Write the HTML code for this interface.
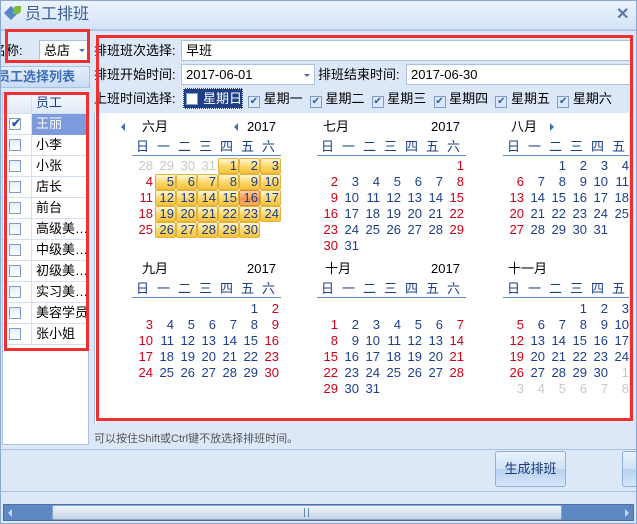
<!DOCTYPE html>
<html><head><meta charset="utf-8"><style>
*{margin:0;padding:0;box-sizing:border-box}
body{width:637px;height:524px;overflow:hidden;background:#dce8f7;font-family:"Liberation Sans","Noto Sans CJK SC",sans-serif;font-size:13px;color:#000;position:relative}
.a{position:absolute}
.title{left:0;top:0;width:637px;height:30px;background:linear-gradient(#eef4fc,#d3e3f6);border-bottom:1px solid #b5cbe8}
.red{position:absolute;border:3px solid #f03030}
.inp{position:absolute;background:#fff;border:1px solid #a9c1e2;height:21px;line-height:19px;padding-left:4px;font-size:13px}
.arrow{position:absolute;width:0;height:0;border-left:3px solid transparent;border-right:3px solid transparent;border-top:3px solid #4a6fa8}
.lst{left:2px;top:92px;width:87px;height:353px;background:#fff;border:1px solid #a9c1e2}
.row{position:absolute;left:0;width:86px;height:21px;border-bottom:1px solid #d3e0f0}
.cb{position:absolute;left:6px;top:4px;width:12px;height:12px;border:1px solid #7d9cc8;background:linear-gradient(#e6eef9,#fff)}
.nm{position:absolute;left:28px;top:0;width:58px;height:21px;border-left:1px solid #d3e0f0;padding-left:4px;line-height:20px;white-space:nowrap}
.cal{left:97px;top:113px;width:532px;height:305px;background:#fff}
.m{position:absolute;width:150px}
.mt{position:absolute;top:0;height:16px;line-height:16px;font-size:13px}
.wd{position:absolute;top:20px;left:-2px;width:149px;height:17px;border-bottom:1px solid #5a8ad0;white-space:nowrap}
.wd span{display:inline-block;width:21px;text-align:center;color:#1d3f8a;line-height:16px}
.dr{position:absolute;left:0;height:16px;white-space:nowrap}
.dr span{display:inline-block;width:21px;height:16px;text-align:right;padding-right:2px;line-height:16px;color:#1d3f8a;vertical-align:top}
.dr .r{color:#d00018}.dr .g{color:#c8c8c8}
.dr .h{background:linear-gradient(#fff8d8,#fbd766 55%,#f6c23c);border:1px solid #e2b23c;border-radius:2px;line-height:14px;padding-right:1px}
.dr .t{background:linear-gradient(#ffd0a0,#f5944a 60%,#f7b060);border:1px solid #e08a30;border-radius:2px;line-height:14px;padding-right:1px}
.btn{position:absolute;left:495px;top:451px;width:71px;height:36px;border:1px solid #8fb0da;border-radius:3px;background:linear-gradient(#e9f2fc,#cfe2f7 50%,#b6d1f0 51%,#d6e7fa);text-align:center;line-height:34px;color:#1a3a78}
</style></head><body>
<div class="a title"></div>
<div class="a" style="left:6px;top:8px;width:10px;height:10px;background:#5a86c6;transform:rotate(45deg)"></div>
<div class="a" style="left:13px;top:6px;width:8px;height:8px;background:#7cbe3a;border-radius:50% 0 50% 0"></div>
<div class="a" style="left:25px;top:5px;font-size:16px;color:#3a5d92;line-height:20px">员工排班</div>
<div class="a" style="left:616px;top:4px;font-size:16px;font-weight:bold;color:#5a7aa8">✕</div>
<div class="a" style="left:0;top:30px;width:637px;height:1px;background:#a9c1e2"></div>

<div class="a" style="left:-7px;top:42px;line-height:18px">名称:</div>
<div class="inp" style="left:39px;top:40px;width:50px">总店</div>
<div class="arrow" style="left:79px;top:49px"></div>
<div class="a" style="left:0;top:66px;width:90px;height:22px;background:linear-gradient(#e7f0fb,#c9dcf3);border:1px solid #a9c1e2"></div>
<div class="a" style="left:-3px;top:68px;font-weight:bold;color:#3d6eb8;line-height:18px;font-size:13px">员工选择列表</div>

<div class="a lst">
<div class="row" style="top:0;background:linear-gradient(#f5f9fe,#dfeaf8)"><div class="nm" style="color:#1d3f8a">员工</div></div>
<div class="row" style="top:21px"><div class="cb" style="background:#fff"><div style="position:absolute;left:1px;top:-3px;color:#2a5aa8;font-size:12px;font-weight:bold">✔</div></div><div class="nm" style="background:#7d9bdc;color:#fff">王丽</div></div>
<div class="row" style="top:42px"><div class="cb"></div><div class="nm">小李</div></div>
<div class="row" style="top:63px"><div class="cb"></div><div class="nm">小张</div></div>
<div class="row" style="top:84px"><div class="cb"></div><div class="nm">店长</div></div>
<div class="row" style="top:105px"><div class="cb"></div><div class="nm">前台</div></div>
<div class="row" style="top:126px"><div class="cb"></div><div class="nm">高级美…</div></div>
<div class="row" style="top:147px"><div class="cb"></div><div class="nm">中级美…</div></div>
<div class="row" style="top:168px"><div class="cb"></div><div class="nm">初级美…</div></div>
<div class="row" style="top:189px"><div class="cb"></div><div class="nm">实习美…</div></div>
<div class="row" style="top:210px"><div class="cb"></div><div class="nm">美容学员</div></div>
<div class="row" style="top:231px"><div class="cb"></div><div class="nm">张小姐</div></div>
</div>

<div class="a" style="left:94px;top:42px;line-height:18px">排班班次选择:</div>
<div class="inp" style="left:181px;top:40px;width:456px">早班</div>
<div class="a" style="left:94px;top:66px;line-height:18px">排班开始时间:</div>
<div class="inp" style="left:181px;top:64px;width:134px">2017-06-01</div>
<div class="arrow" style="left:304px;top:74px"></div>
<div class="a" style="left:318px;top:66px;line-height:18px">排班结束时间:</div>
<div class="inp" style="left:406px;top:64px;width:231px">2017-06-30</div>
<div class="a" style="left:94px;top:90px;line-height:18px">上班时间选择:</div>
<div class="a" style="left:183px;top:88px;width:60px;height:21px;background:#1f3f86;border:1px dotted #fff"></div>
<div class="a" style="left:186px;top:93px;width:12px;height:12px;border:1px solid #7d9cc8;background:#fff"></div>
<div class="a" style="left:203px;top:90px;color:#fff;line-height:18px">星期日</div>
<div class="a" style="left:248px;top:90px;line-height:18px;white-space:nowrap;word-spacing:0">
<span style="display:inline-block;width:12px;height:12px;border:1px solid #7d9cc8;vertical-align:-1px;color:#2a5aa8;font-size:10px;line-height:10px;text-align:center">✔</span> 星期一 &nbsp;<span style="display:inline-block;width:12px;height:12px;border:1px solid #7d9cc8;vertical-align:-1px;color:#2a5aa8;font-size:10px;line-height:10px;text-align:center">✔</span> 星期二 &nbsp;<span style="display:inline-block;width:12px;height:12px;border:1px solid #7d9cc8;vertical-align:-1px;color:#2a5aa8;font-size:10px;line-height:10px;text-align:center">✔</span> 星期三 &nbsp;<span style="display:inline-block;width:12px;height:12px;border:1px solid #7d9cc8;vertical-align:-1px;color:#2a5aa8;font-size:10px;line-height:10px;text-align:center">✔</span> 星期四 &nbsp;<span style="display:inline-block;width:12px;height:12px;border:1px solid #7d9cc8;vertical-align:-1px;color:#2a5aa8;font-size:10px;line-height:10px;text-align:center">✔</span> 星期五 &nbsp;<span style="display:inline-block;width:12px;height:12px;border:1px solid #7d9cc8;vertical-align:-1px;color:#2a5aa8;font-size:10px;line-height:10px;text-align:center">✔</span> 星期六</div>

<div class="a cal" style="overflow:hidden">
<!-- June -->
<div class="m" style="left:37px;top:6px">
<div class="a" style="left:-13px;top:4px;border-top:4px solid transparent;border-bottom:4px solid transparent;border-right:4px solid #3d6eb8"></div>
<div class="mt" style="left:8px">六月</div>
<div class="a" style="left:100px;top:4px;border-top:4px solid transparent;border-bottom:4px solid transparent;border-right:4px solid #3d6eb8"></div>
<div class="mt" style="left:113px">2017</div>
<div class="wd"><span>日</span><span>一</span><span>二</span><span>三</span><span>四</span><span>五</span><span>六</span></div>
<div class="dr" style="top:39px"><span class="g">28</span><span class="g">29</span><span class="g">30</span><span class="g">31</span><span class="h">1</span><span class="h">2</span><span class="h">3</span></div>
<div class="dr" style="top:55px"><span class="r">4</span><span class="h">5</span><span class="h">6</span><span class="h">7</span><span class="h">8</span><span class="h">9</span><span class="h">10</span></div>
<div class="dr" style="top:71px"><span class="r">11</span><span class="h">12</span><span class="h">13</span><span class="h">14</span><span class="h">15</span><span class="t">16</span><span class="h">17</span></div>
<div class="dr" style="top:87px"><span class="r">18</span><span class="h">19</span><span class="h">20</span><span class="h">21</span><span class="h">22</span><span class="h">23</span><span class="h">24</span></div>
<div class="dr" style="top:103px"><span class="r">25</span><span class="h">26</span><span class="h">27</span><span class="h">28</span><span class="h">29</span><span class="h">30</span></div>
</div>
<!-- July -->
<div class="m" style="left:222px;top:6px">
<div class="mt" style="left:4px">七月</div><div class="mt" style="left:112px">2017</div>
<div class="wd"><span>日</span><span>一</span><span>二</span><span>三</span><span>四</span><span>五</span><span>六</span></div>
<div class="dr" style="top:39px"><span></span><span></span><span></span><span></span><span></span><span></span><span class="r">1</span></div>
<div class="dr" style="top:55px"><span class="r">2</span><span>3</span><span>4</span><span>5</span><span>6</span><span>7</span><span class="r">8</span></div>
<div class="dr" style="top:71px"><span class="r">9</span><span>10</span><span>11</span><span>12</span><span>13</span><span>14</span><span class="r">15</span></div>
<div class="dr" style="top:87px"><span class="r">16</span><span>17</span><span>18</span><span>19</span><span>20</span><span>21</span><span class="r">22</span></div>
<div class="dr" style="top:103px"><span class="r">23</span><span>24</span><span>25</span><span>26</span><span>27</span><span>28</span><span class="r">29</span></div>
<div class="dr" style="top:119px"><span class="r">30</span><span>31</span></div>
</div>
<!-- Aug -->
<div class="m" style="left:408px;top:6px">
<div class="mt" style="left:6px">八月</div>
<div class="a" style="left:45px;top:4px;border-top:4px solid transparent;border-bottom:4px solid transparent;border-left:4px solid #3d6eb8"></div>
<div class="wd"><span>日</span><span>一</span><span>二</span><span>三</span><span>四</span><span>五</span><span>六</span></div>
<div class="dr" style="top:39px"><span></span><span></span><span>1</span><span>2</span><span>3</span><span>4</span><span class="r">5</span></div>
<div class="dr" style="top:55px"><span class="r">6</span><span>7</span><span>8</span><span>9</span><span>10</span><span>11</span><span class="r">12</span></div>
<div class="dr" style="top:71px"><span class="r">13</span><span>14</span><span>15</span><span>16</span><span>17</span><span>18</span><span class="r">19</span></div>
<div class="dr" style="top:87px"><span class="r">20</span><span>21</span><span>22</span><span>23</span><span>24</span><span>25</span><span class="r">26</span></div>
<div class="dr" style="top:103px"><span class="r">27</span><span>28</span><span>29</span><span>30</span><span>31</span></div>
</div>
<!-- Sep -->
<div class="m" style="left:37px;top:148px">
<div class="mt" style="left:8px">九月</div><div class="mt" style="left:113px">2017</div>
<div class="wd"><span>日</span><span>一</span><span>二</span><span>三</span><span>四</span><span>五</span><span>六</span></div>
<div class="dr" style="top:40px"><span></span><span></span><span></span><span></span><span></span><span>1</span><span class="r">2</span></div>
<div class="dr" style="top:56px"><span class="r">3</span><span>4</span><span>5</span><span>6</span><span>7</span><span>8</span><span class="r">9</span></div>
<div class="dr" style="top:72px"><span class="r">10</span><span>11</span><span>12</span><span>13</span><span>14</span><span>15</span><span class="r">16</span></div>
<div class="dr" style="top:88px"><span class="r">17</span><span>18</span><span>19</span><span>20</span><span>21</span><span>22</span><span class="r">23</span></div>
<div class="dr" style="top:104px"><span class="r">24</span><span>25</span><span>26</span><span>27</span><span>28</span><span>29</span><span class="r">30</span></div>
</div>
<!-- Oct -->
<div class="m" style="left:222px;top:148px">
<div class="mt" style="left:6px">十月</div><div class="mt" style="left:112px">2017</div>
<div class="wd"><span>日</span><span>一</span><span>二</span><span>三</span><span>四</span><span>五</span><span>六</span></div>
<div class="dr" style="top:56px"><span class="r">1</span><span>2</span><span>3</span><span>4</span><span>5</span><span>6</span><span class="r">7</span></div>
<div class="dr" style="top:72px"><span class="r">8</span><span>9</span><span>10</span><span>11</span><span>12</span><span>13</span><span class="r">14</span></div>
<div class="dr" style="top:88px"><span class="r">15</span><span>16</span><span>17</span><span>18</span><span>19</span><span>20</span><span class="r">21</span></div>
<div class="dr" style="top:104px"><span class="r">22</span><span>23</span><span>24</span><span>25</span><span>26</span><span>27</span><span class="r">28</span></div>
<div class="dr" style="top:120px"><span class="r">29</span><span>30</span><span>31</span></div>
</div>
<!-- Nov -->
<div class="m" style="left:408px;top:148px">
<div class="mt" style="left:3px">十一月</div>
<div class="wd"><span>日</span><span>一</span><span>二</span><span>三</span><span>四</span><span>五</span><span>六</span></div>
<div class="dr" style="top:40px"><span></span><span></span><span></span><span>1</span><span>2</span><span>3</span><span class="r">4</span></div>
<div class="dr" style="top:56px"><span class="r">5</span><span>6</span><span>7</span><span>8</span><span>9</span><span>10</span><span class="r">11</span></div>
<div class="dr" style="top:72px"><span class="r">12</span><span>13</span><span>14</span><span>15</span><span>16</span><span>17</span><span class="r">18</span></div>
<div class="dr" style="top:88px"><span class="r">19</span><span>20</span><span>21</span><span>22</span><span>23</span><span>24</span><span class="r">25</span></div>
<div class="dr" style="top:104px"><span class="r">26</span><span>27</span><span>28</span><span>29</span><span>30</span><span class="g">1</span><span class="g">2</span></div>
<div class="dr" style="top:120px"><span class="g">3</span><span class="g">4</span><span class="g">5</span><span class="g">6</span><span class="g">7</span><span class="g">8</span><span class="g">9</span></div>
</div>
</div>
<div class="a" style="left:632px;top:40px;width:5px;height:380px;background:#dce8f7"></div>
<div class="a" style="left:94px;top:113px;width:3px;height:310px;background:#fff;border-left:1px solid #a9c1e2"></div>

<div class="red" style="left:5px;top:29px;width:85px;height:34px"></div>
<div class="red" style="left:4px;top:92px;width:85px;height:259px"></div>
<div class="red" style="left:96px;top:35px;width:537px;height:386px"></div>

<div class="a" style="left:94px;top:432px;font-size:11px;color:#555;line-height:14px">可以按住Shift或Ctrl键不放选择排班时间。</div>
<div class="a" style="left:0;top:449px;width:637px;height:1px;background:#a9c1e2"></div>
<div class="btn">生成排班</div>
<div class="a" style="left:622px;top:451px;width:20px;height:36px;border:1px solid #8fb0da;border-radius:3px;background:linear-gradient(#e9f2fc,#cfe2f7 50%,#b6d1f0 51%,#d6e7fa)"></div>
<div class="a" style="left:0;top:491px;width:637px;height:1px;background:#a9c1e2"></div>
<div class="a" style="left:3px;top:504px;width:631px;height:17px;background:#5e88c4;border:1px solid #4a70a8"></div>
<div class="a" style="left:52px;top:505px;width:510px;height:15px;background:linear-gradient(#f0f4fa,#c5d3e6);border:1px solid #8aa4c8;border-radius:2px"></div>
<div class="a" style="left:304px;top:508px;width:5px;height:9px;border-left:1px solid #6a86b0;border-right:1px solid #6a86b0"></div>
<div class="a" style="left:8px;top:509px;border-top:4px solid transparent;border-bottom:4px solid transparent;border-right:4px solid #c8d8ee"></div>
<div class="a" style="left:625px;top:509px;border-top:4px solid transparent;border-bottom:4px solid transparent;border-left:4px solid #c8d8ee"></div>
<div class="a" style="left:0;top:0;width:637px;height:524px;border:1px solid #8aa8d0;pointer-events:none"></div>
</body></html>
